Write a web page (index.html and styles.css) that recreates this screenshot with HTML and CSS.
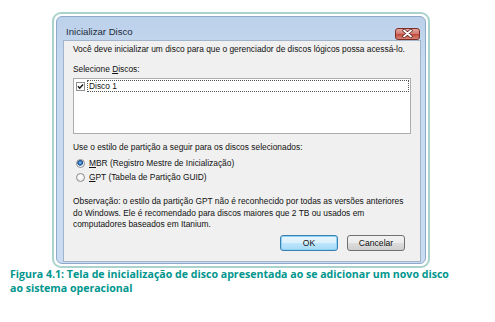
FILE: index.html
```html
<!DOCTYPE html>
<html lang="pt-BR">
  <head>
    <meta charset="utf-8"/>
    <title>Inicializar Disco</title>
    <link rel="stylesheet" href="styles.css">
  </head>
  <body>
    <div class="figure">
      <div class="window">
        <div class="window__titlebar">
          <span class="window__title">Inicializar Disco</span>
          <span class="window__close">
            <svg width="11" height="9" viewBox="0 0 11 9">
              <path d="M2 1.5 L9 7.5 M9 1.5 L2 7.5" stroke="#5a1c1c" stroke-width="3.2" stroke-linecap="round"/>
              <path d="M2 1.5 L9 7.5 M9 1.5 L2 7.5" stroke="#fff" stroke-width="1.8" stroke-linecap="round"/>
            </svg>
          </span>
        </div>
        <div class="window__body">
          <p class="dialog__text">Você deve inicializar um disco para que o gerenciador de discos lógicos possa acessá-lo.</p>
          <p class="dialog__label">Selecione <u>D</u>iscos:</p>
          <div class="disk-list">
            <div class="disk-list__item">
              <span class="checkbox">
                <svg width="9" height="9" viewBox="0 0 9 9">
                  <rect x="0.5" y="0.5" width="8" height="8" fill="#fff" stroke="#8f8f8f"/>
                  <path d="M2 4.3 L3.7 6.2 L7 2.4" fill="none" stroke="#1b1b1b" stroke-width="1.5"/>
                </svg>
              </span>
              <span class="disk-list__name">Disco 1</span>
            </div>
          </div>
          <p class="dialog__label dialog__label--section">Use o estilo de partição a seguir para os discos selecionados:</p>
          <div class="radio-group">
            <div class="radio radio--checked"><span class="radio__circle"></span><span><u>M</u>BR (Registro Mestre de Inicialização)</span></div>
            <div class="radio"><span class="radio__circle"></span><span><u>G</u>PT (Tabela de Partição GUID)</span></div>
          </div>
          <p class="dialog__note">Observação: o estilo da partição GPT não é reconhecido por todas as versões anteriores<br>do Windows. Ele é recomendado para discos maiores que 2 TB ou usados em<br>computadores baseados em Itanium.</p>
          <div class="dialog__footer">
            <button type="button" class="dialog__button dialog__button--default">OK</button>
            <button type="button" class="dialog__button">Cancelar</button>
          </div>
        </div>
      </div>
    </div>

    <p class="caption">Figura 4.1: Tela de inicialização de disco apresentada ao se adicionar um novo disco<br>ao sistema operacional</p>
  </body>
</html>
```

FILE: styles.css
```css
body {
  margin: 0;
  background: #FFF;
  font-family: 'Liberation Sans', Arial, sans-serif;
}

.figure {
  box-sizing: border-box;
  width: 378px;
  height: 256px;
  margin: 12px 0 0 52px;
  padding: 2px;

  background: #FFF;
  border: 2px solid #A9D3CC;
  border-radius: 9px;
}

.window {
  box-sizing: border-box;
  height: 100%;
  padding: 0 4px 3px 6px;

  background: linear-gradient(to bottom, #BCD1EA, #C7DAF0 20%, #C9DCF1);
  border: 1px solid #8FA9C9;
  border-radius: 6px;
}

.window__titlebar {
  display: flex;
  align-items: center;
  justify-content: space-between;
  height: 23px;
  padding: 0 1px 0 3px;
}

.window__title {
  padding-top: 5px;
  color: #1D2B3C;
  font-size: 9.6px;
}

.window__close {
  display: flex;
  align-items: center;
  justify-content: center;
  box-sizing: border-box;
  width: 25px;
  height: 12px;
  margin-top: 10px;

  background: linear-gradient(to bottom, #E4A7A0, #D27C72 45%, #C24B3E 55%, #D68676);
  border: 1px solid #7E2D26;
  border-radius: 3px;
}

.window__body {
  box-sizing: border-box;
  height: 222px;
  padding: 3px 9px 0;

  background: #F0F0F0;
  border: 1px solid #A3B4C9;
  color: #111;
  font-size: 8.4px;
  line-height: 11px;
}

.window__body p {
  margin: 0;
}

.dialog__label {
  margin-top: 9px !important;
}

.dialog__label--section {
  margin-top: 8px !important;
}

.disk-list {
  height: 56px;
  margin-top: 3px;
  padding: 1px 1px;
  box-sizing: border-box;

  background: #FFF;
  border: 1px solid #ADADAD;
}

.disk-list__item {
  display: flex;
  align-items: center;
  height: 12px;
  padding-left: 1px;
}

.checkbox {
  display: flex;
  margin-right: 2px;
}

.disk-list__name {
  flex: 1;
  height: 12px;
  padding-left: 1px;
  border: 1px dotted #555;
  box-sizing: border-box;
  line-height: 10px;
}

.radio-group {
  margin-top: 3px;
  padding-left: 3px;
}

.radio {
  display: flex;
  align-items: center;
  height: 14px;
}

.radio__circle {
  box-sizing: border-box;
  width: 9px;
  height: 9px;
  margin-right: 4px;

  background: radial-gradient(circle at 50% 40%, #FFF, #E3E3E3);
  border: 1px solid #8C8C8C;
  border-radius: 50%;
}

.radio--checked .radio__circle {
  background: radial-gradient(circle at 45% 40%, #9CCBF0 0, #2E72BE 1.6px, #1C4F8E 2.6px, #E8EEF4 3.1px, #FFF 4.5px);
}

.dialog__note {
  margin-top: 12px !important;
  line-height: 11.5px;
}

.dialog__footer {
  display: flex;
  justify-content: flex-end;
  margin-top: 4px;
  padding-right: 6px;
}

.dialog__button {
  box-sizing: border-box;
  width: 58px;
  height: 16px;
  padding: 0;

  background: linear-gradient(to bottom, #F2F2F2, #EBEBEB 50%, #DDDDDD 51%, #CFCFCF);
  border: 1px solid #707070;
  border-radius: 3px;

  color: #111;
  font-family: 'Liberation Sans', Arial, sans-serif;
  font-size: 8.6px;
}

.dialog__button + .dialog__button {
  margin-left: 9px;
}

.dialog__button--default {
  background: linear-gradient(to bottom, #EAF6FD, #D9F0FC 50%, #BEE6FD 51%, #A7D9F5);
  border-color: #3C7FB1;
  box-shadow: inset 0 0 0 1px #8BD3F7;
}

.caption {
  margin: 0 0 0 10px;
  color: #00968E;
  font-family: 'Open Sans', sans-serif;
  font-size: 10.6px;
  font-weight: 700;
  line-height: 13.5px;
}
```
